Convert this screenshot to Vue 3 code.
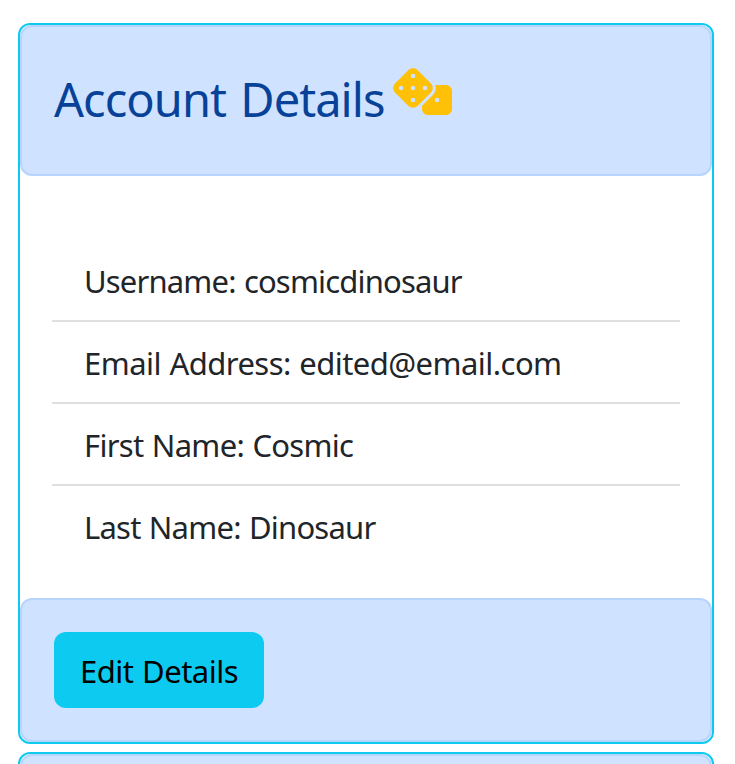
<script setup>
const details = [
  { key: 'username', label: 'Username', value: 'cosmicdinosaur' },
  { key: 'email', label: 'Email Address', value: 'edited@email.com' },
  { key: 'first', label: 'First Name', value: 'Cosmic' },
  { key: 'last', label: 'Last Name', value: 'Dinosaur' },
]
</script>

<template>
  <main class="page">
    <section class="card">
      <header class="panel card-header">
        <h1 class="title">Account Details</h1>
        <svg class="dice" viewBox="0 0 640 512" aria-hidden="true">
          <path
            fill="currentColor"
            d="M274.9 34.3c-28.1-28.1-73.7-28.1-101.8 0L34.3 173.1c-28.1 28.1-28.1 73.7 0 101.8L173.1 413.7c28.1 28.1 73.7 28.1 101.8 0L413.7 274.9c28.1-28.1 28.1-73.7 0-101.8L274.9 34.3zM200 224a24 24 0 1 1 48 0 24 24 0 1 1 -48 0zM96 200a24 24 0 1 1 0 48 24 24 0 1 1 0-48zM224 376a24 24 0 1 1 0-48 24 24 0 1 1 0 48zM352 200a24 24 0 1 1 0 48 24 24 0 1 1 0-48zM224 120a24 24 0 1 1 0-48 24 24 0 1 1 0 48zm96 328c0 35.3 28.7 64 64 64H576c35.3 0 64-28.7 64-64V256c0-35.3-28.7-64-64-64H461.7c11.6 36 3.1 77-25.4 105.5L320 413.8V448zM480 328a24 24 0 1 1 0 48 24 24 0 1 1 0-48z"
          />
        </svg>
      </header>
      <ul class="details">
        <li v-for="item in details" :key="item.key" :class="['row', item.key]">
          {{ item.label }}: {{ item.value }}
        </li>
      </ul>
      <footer class="panel card-footer">
        <button class="edit" type="button">Edit Details</button>
      </footer>
    </section>
    <section class="card">
      <header class="panel card-header"></header>
    </section>
  </main>
</template>

<style>
body {
  background: #fff;
  overflow: hidden;
}
</style>

<style scoped>
.page {
  box-sizing: border-box;
  height: 764px;
  overflow: hidden;
  padding: 23px 21px 0 18px;
  display: flex;
  flex-direction: column;
  gap: 8px;
  font-family: "Segoe UI", "Noto Sans", sans-serif;
  color: #212529;
}
.card {
  flex: none;
  border: 2px solid #0dcaf0;
  border-radius: 12px;
  background: #fff;
}
.panel {
  box-sizing: border-box;
  border: 2px solid #b6d4fe;
  border-radius: 12px;
  background: #cfe2ff;
}
.card-header {
  height: 151px;
  padding: 40px 32px 0;
  display: flex;
  align-items: flex-start;
}
.title {
  margin: 0;
  width: 338px;
  flex: none;
  font-size: 47px;
  font-weight: 400;
  line-height: 65px;
  letter-spacing: -0.95px;
  word-spacing: 3px;
  white-space: nowrap;
  color: #084298;
}
.dice {
  flex: none;
  width: 60px;
  height: 48px;
  color: #ffc107;
}
.details {
  list-style: none;
  margin: 0;
  padding: 64px 32px 32px;
}
.row {
  box-sizing: border-box;
  height: 82px;
  padding: 16px 32px;
  border-bottom: 2px solid #dfdfdf;
  font-size: 31px;
  line-height: 50px;
  letter-spacing: -0.7px;
  word-spacing: 1px;
  white-space: nowrap;
}
.username {
  letter-spacing: -0.83px;
}
.email {
  letter-spacing: -0.54px;
}
.last {
  letter-spacing: -0.78px;
}
.row:last-child {
  height: 80px;
  border-bottom: 0;
}
.card-footer {
  height: 144px;
  padding: 32px;
}
.edit {
  display: block;
  box-sizing: border-box;
  width: 210px;
  height: 76px;
  padding: 2px 0 0 26px;
  border: 0;
  border-radius: 12px;
  background: #0dcaf0;
  color: #000;
  font-family: inherit;
  font-size: 31px;
  line-height: 74px;
  letter-spacing: -0.5px;
  word-spacing: 1px;
  text-align: left;
  white-space: nowrap;
}
</style>
